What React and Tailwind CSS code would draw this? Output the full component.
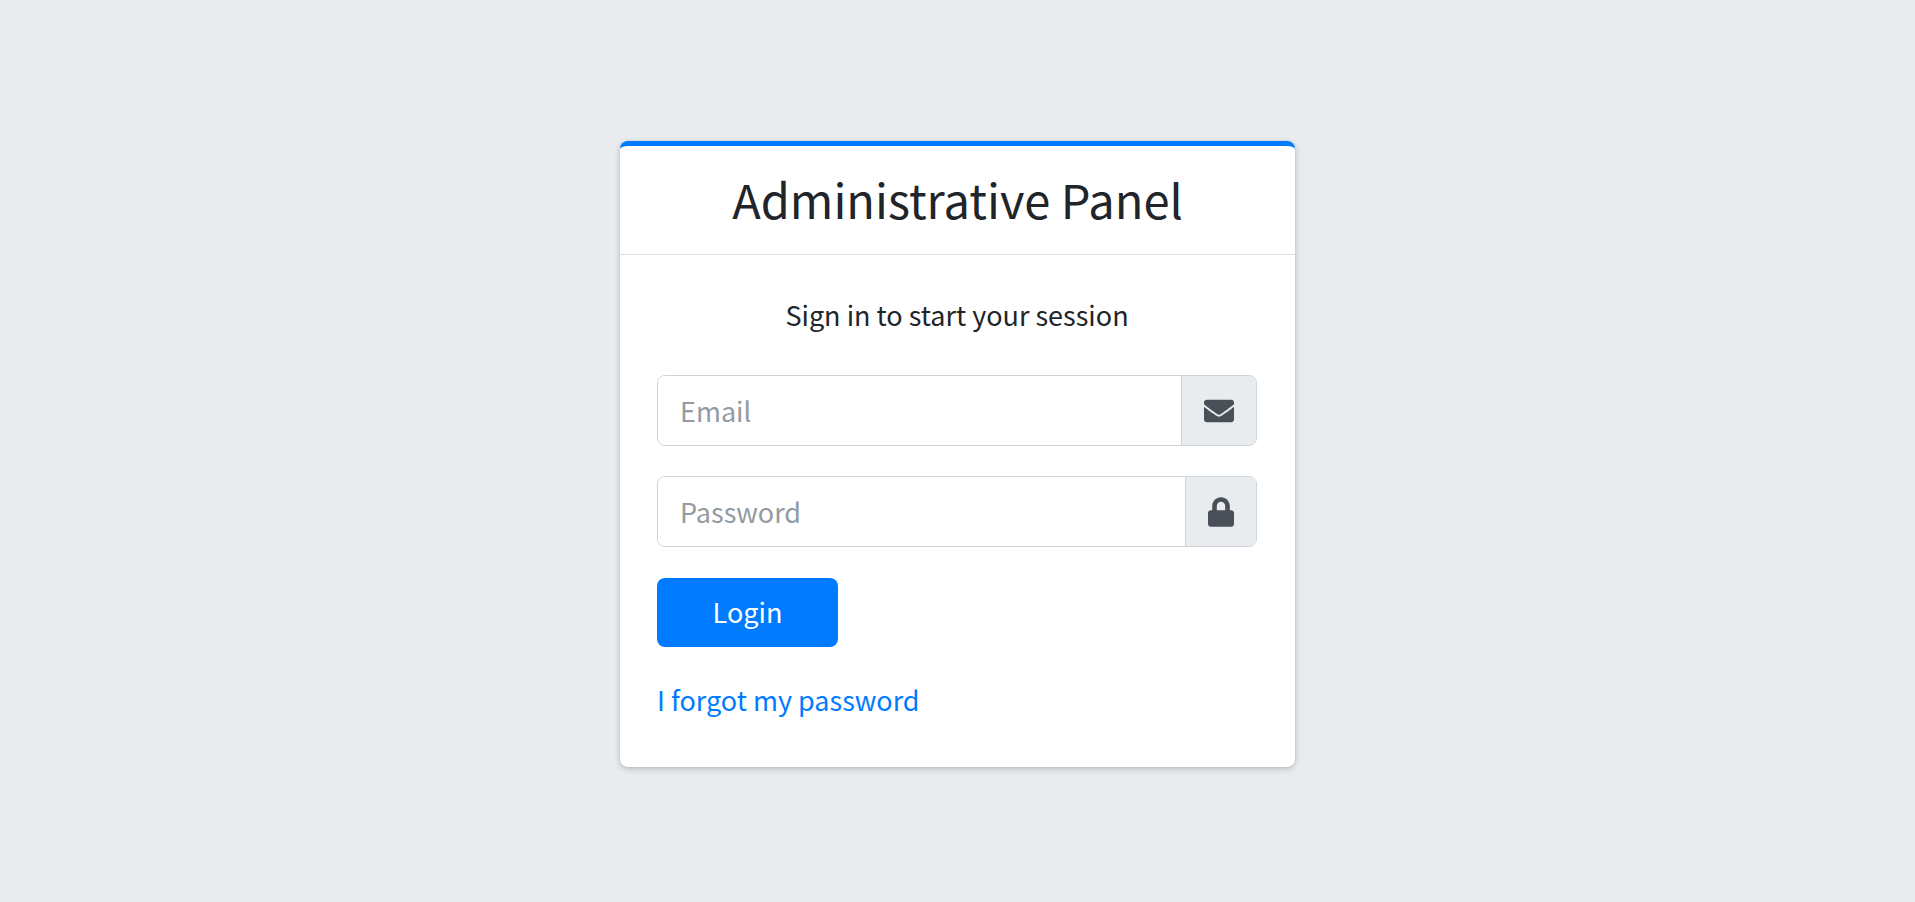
import { FaEnvelope, FaLock } from "react-icons/fa";

function Field({ id, type, label, icon }) {
  return (
    <div className="flex h-[71px] w-full overflow-hidden rounded-lg border border-[#ced4da]">
      <input
        id={id}
        name={id}
        type={type}
        placeholder={label}
        aria-label={label}
        className="min-w-0 flex-1 bg-white px-[22px] text-[27px] leading-[45px] text-[#495057] outline-none placeholder:text-[#939ba2]"
      />
      <label
        htmlFor={id}
        className="flex shrink-0 items-center border-l border-[#ced4da] bg-[#e9ecef] px-[22px] text-[#495057]"
      >
        {icon}
      </label>
    </div>
  );
}

export default function App() {
  return (
    <main className="flex min-h-screen items-center justify-center bg-[#e9ecef] pt-1.5 font-['Noto_Sans_CJK_SC',sans-serif] text-[27px] leading-[45px] text-[#212529]">
      <section className="w-full max-w-[675px] rounded-lg border-t-5 border-[#007bff] bg-white shadow-[0_2px_6px_rgba(0,0,0,0.2),0_0_2px_rgba(0,0,0,0.125)]">
        <header className="border-b border-[#dfdfdf] px-9 pt-[21px] pb-[23px] text-center">
          <h1 className="text-[47px] leading-[64px]">Administrative Panel</h1>
        </header>
        <form
          className="flex flex-col items-start pt-[37px] pr-[38px] pb-[45px] pl-[37px]"
          onSubmit={(e) => e.preventDefault()}
        >
          <p className="mb-[38px] w-full text-center">Sign in to start your session</p>
          <div className="mb-[31px] flex w-full flex-col gap-[30px]">
            <Field
              id="email"
              type="email"
              label="Email"
              icon={<FaEnvelope className="h-[30px] w-[30px]" aria-hidden="true" />}
            />
            <Field
              id="password"
              type="password"
              label="Password"
              icon={<FaLock className="h-[30px] w-[26px]" aria-hidden="true" />}
            />
          </div>
          <button
            type="submit"
            className="mb-[30px] h-[69px] w-[181px] rounded-lg bg-[#007bff] pb-0.5 text-white"
          >
            Login
          </button>
          <a href="#forgot" className="text-[#007bff]">
            I forgot my password
          </a>
        </form>
      </section>
    </main>
  );
}
